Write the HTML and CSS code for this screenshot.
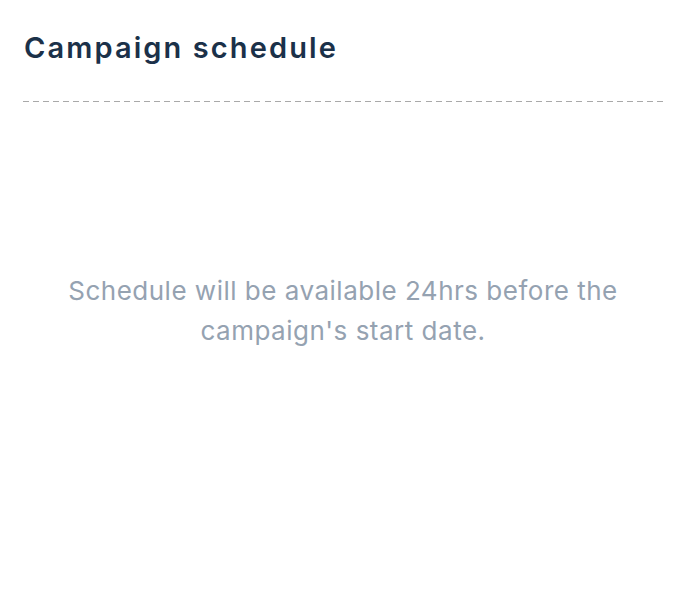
FILE: index.html
```html
<!DOCTYPE html>
<html>
<head>
<meta charset="utf-8">
<link rel="stylesheet" href="styles.css">
</head>
<body>
<div class="panel">
  <h1 class="title">Campaign schedule</h1>
  <div class="divider"></div>
  <p class="empty">Schedule will be available 24hrs before the campaign's start date.</p>
</div>
</body>
</html>
```
FILE: styles.css
```css
html, body {
  margin: 0;
  padding: 0;
  background: #ffffff;
}
.panel {
  padding: 28px 26px 0 23px;
  font-family: Inter, "Noto Sans", sans-serif;
}
.title {
  margin: 0 0 0 1px;
  font-size: 29px;
  line-height: 40px;
  font-weight: 600;
  letter-spacing: 2.1px;
  color: #1b3149;
}
.divider {
  margin-top: 33px;
  height: 1px;
  background: repeating-linear-gradient(to right, #a9a9a9 0 6px, transparent 6px 10.063px);
}
.empty {
  margin: 169px auto 0;
  max-width: 600px;
  text-align: center;
  font-size: 26px;
  line-height: 40px;
  letter-spacing: 0.5px;
  color: #95a2b1;
}
```
